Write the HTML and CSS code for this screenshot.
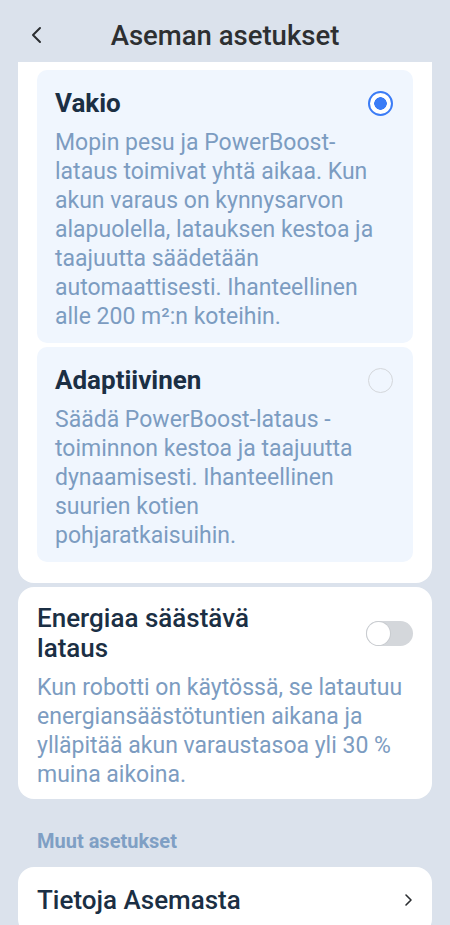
FILE: index.html
```html
<html>
<head>
<title>Aseman asetukset</title>
<meta name="viewport" content="width=device-width, initial-scale=1">
<link rel="stylesheet" href="styles.css">
</head>
<body>
<div class="header">
  <button type="button" class="back">
    <svg width="14" height="20" viewBox="0 0 14 20"><path d="M10 3 L3 10 L10 17" fill="none" stroke="#2b2e31" stroke-width="2" stroke-linecap="round" stroke-linejoin="round"/></svg>
  </button>
  <div class="title">Aseman asetukset</div>
</div>

<div class="content">
  <div class="card modes">
    <div class="option">
      <div class="option-head">
        <div class="option-title">Vakio</div>
        <span class="radio checked"></span>
      </div>
      <div class="desc">Mopin pesu ja PowerBoost-lataus toimivat yhtä aikaa. Kun akun varaus on kynnysarvon alapuolella, latauksen kestoa ja taajuutta säädetään automaattisesti. Ihanteellinen alle 200 m²:n koteihin.</div>
    </div>
    <div class="option">
      <div class="option-head">
        <div class="option-title">Adaptiivinen</div>
        <span class="radio"></span>
      </div>
      <div class="desc">Säädä PowerBoost-lataus -toiminnon kestoa ja taajuutta dynaamisesti. Ihanteellinen suurien kotien pohjaratkaisuihin.</div>
    </div>
  </div>

  <div class="card setting">
    <div class="setting-head">
      <div class="setting-title">Energiaa säästävä lataus</div>
      <span class="toggle"><span class="knob"></span></span>
    </div>
    <div class="desc">Kun robotti on käytössä, se latautuu energiansäästötuntien aikana ja ylläpitää akun varaustasoa yli 30 % muina aikoina.</div>
  </div>

  <div class="section-label">Muut asetukset</div>

  <div class="card link-row">
    <div class="setting-title">Tietoja Asemasta</div>
    <svg width="10" height="16" viewBox="0 0 10 16"><path d="M3 3 L8 8 L3 13" fill="none" stroke="#2b2e31" stroke-width="1.6" stroke-linecap="round" stroke-linejoin="round"/></svg>
  </div>
</div>
</body>
</html>
```

FILE: styles.css
```css
html, body {
  margin: 0;
  padding: 0;
  background-color: #dbe2ec;
  font-family: Roboto, "Liberation Sans", sans-serif;
}

.header {
  height: 62px;
  display: flex;
  align-items: center;
  position: relative;
  justify-content: center;
}

.back {
  position: absolute;
  left: 27px;
  top: 25px;
  border: none;
  background: transparent;
  padding: 0;
  width: 20px;
  height: 20px;
}

.title {
  font-size: 27.5px;
  font-weight: 500;
  color: #2d2f31;
  margin-top: 8px;
}

.content {
  padding: 0 18px;
}

.card {
  background-color: #fff;
  border-radius: 16px;
}

.modes {
  border-radius: 0 0 16px 16px;
  padding: 8px 19px 21px;
  display: flex;
  flex-direction: column;
  gap: 4px;
}

.option {
  background-color: #f0f6fe;
  border-radius: 10px;
  padding: 18px 20px 12px 18px;
}

.option .desc {
  padding-right: 8px;
}

.option-head {
  display: flex;
  align-items: center;
  justify-content: space-between;
}

.option-title {
  font-size: 26px;
  font-weight: 700;
  line-height: 30px;
  color: #1b2f44;
}

.desc {
  font-size: 23px;
  line-height: 29px;
  color: #7c9cc1;
  margin-top: 10px;
}

.radio {
  width: 25px;
  height: 25px;
  border-radius: 50%;
  border: 1.5px solid #d4d7db;
  box-sizing: border-box;
  display: inline-block;
}

.radio.checked {
  border: 2px solid #3b7cf6;
  background: radial-gradient(circle, #3b7cf6 0, #3b7cf6 6px, #fff 6.5px);
}

.setting {
  margin-top: 4px;
  padding: 16px 19px 10px;
}

.setting-head {
  display: flex;
  align-items: center;
  justify-content: space-between;
}

.setting-title {
  font-size: 26px;
  font-weight: 500;
  line-height: 30px;
  color: #1b2f44;
  max-width: 260px;
}

.toggle {
  width: 47px;
  height: 25px;
  border-radius: 13px;
  background-color: #d4d7db;
  display: flex;
  align-items: center;
  padding: 0 1px;
  box-sizing: border-box;
}

.knob {
  width: 23px;
  height: 23px;
  border-radius: 50%;
  background-color: #fff;
  box-shadow: 0 0 0 1px #c9ccd0;
}

.section-label {
  font-size: 20px;
  font-weight: 700;
  color: #7f9fc4;
  padding: 30px 19px 0;
  line-height: 24px;
}

.link-row {
  margin-top: 14px;
  padding: 18px 19px 20px;
  display: flex;
  align-items: center;
  justify-content: space-between;
}
```
